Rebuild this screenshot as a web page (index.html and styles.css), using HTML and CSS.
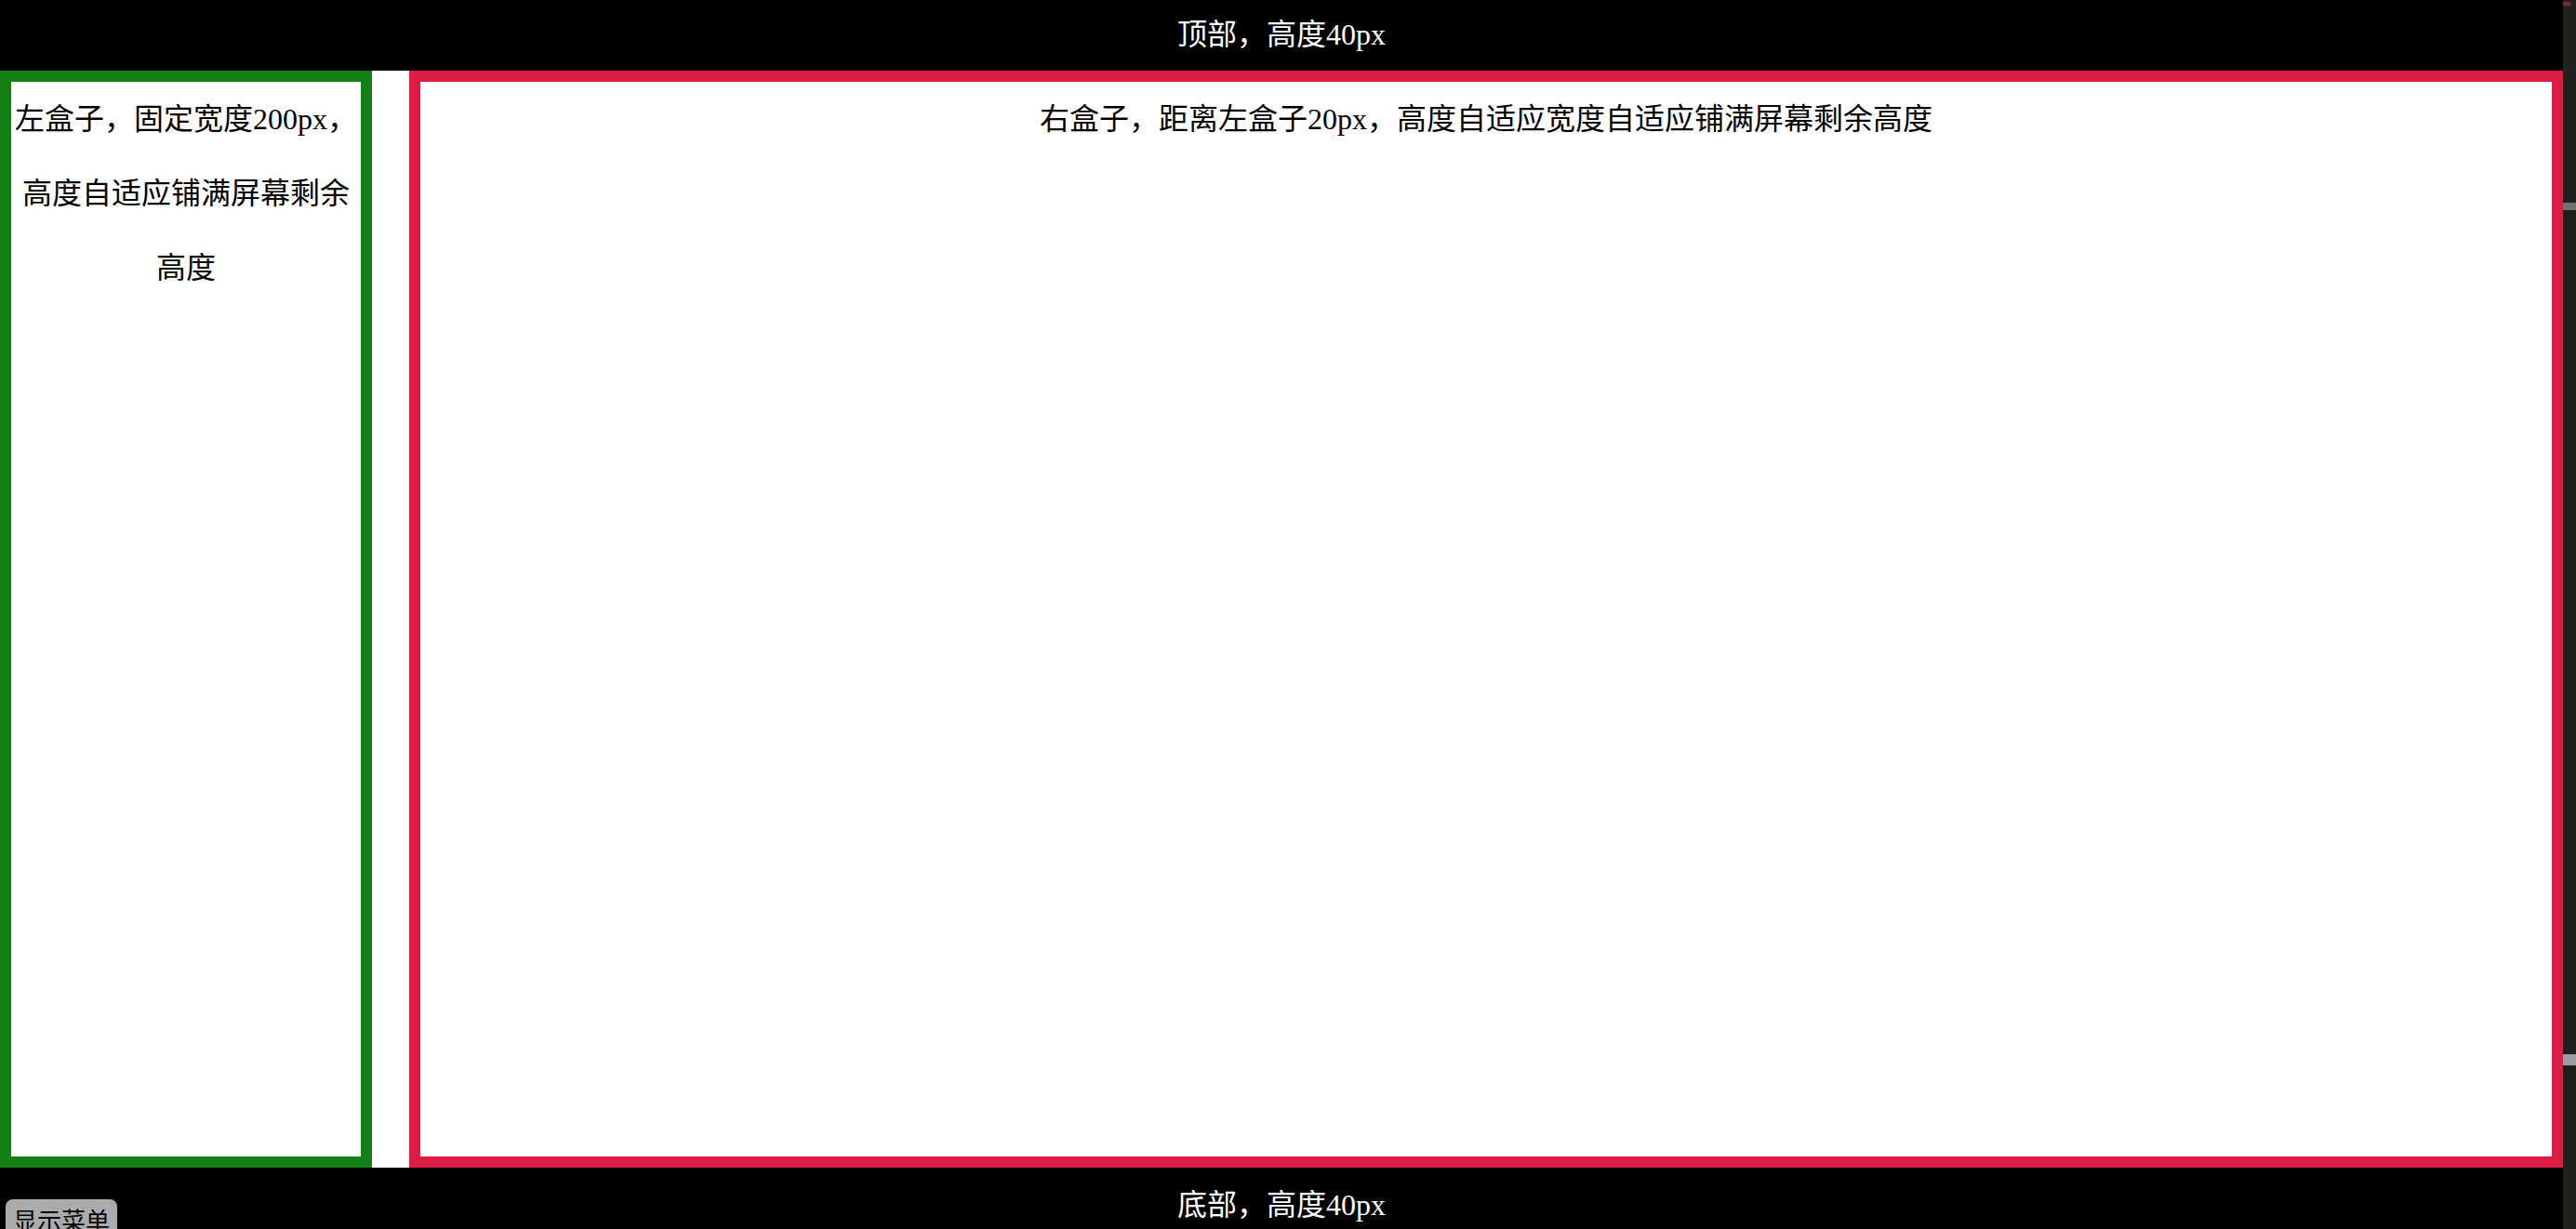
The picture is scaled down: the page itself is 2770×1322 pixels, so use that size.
FILE: index.html
```html
<!DOCTYPE html>
<html lang="zh-CN">
<head>
<meta charset="utf-8">
<title>布局</title>
<link rel="stylesheet" href="styles.css">
</head>
<body>
<div class="page">
  <div class="header">顶部，高度40px</div>
  <div class="main">
    <div class="left">左盒子，固定宽度200px，高度自适应铺满屏幕剩余高度</div>
    <div class="right">右盒子，距离左盒子20px，高度自适应宽度自适应铺满屏幕剩余高度</div>
  </div>
  <div class="footer">底部，高度40px
    <button class="menu-btn">显示菜单</button>
  </div>
</div>
<div class="scrollbar">
  <span class="mark mark-top"></span>
  <span class="mark mark-a"></span>
  <span class="mark mark-b"></span>
</div>
</body>
</html>
```
FILE: styles.css
```css
html, body {
  margin: 0;
  padding: 0;
  height: 100%;
  overflow: hidden;
}
body {
  display: flex;
  flex-direction: row;
  font-family: "Liberation Serif", "Noto Sans CJK SC", serif;
  font-size: 32px;
  background: #ffffff;
  color: #000000;
}
.page {
  flex: 1;
  display: flex;
  flex-direction: column;
  overflow: hidden;
  min-width: 0;
}
.header {
  flex-shrink: 0;
  height: 76px;
  line-height: 74px;
  background: #000000;
  color: #ffffff;
  text-align: center;
}
.main {
  flex-shrink: 0;
  height: 1180px;
  display: flex;
  flex-direction: row;
  gap: 40px;
}
.left {
  width: 400px;
  flex-shrink: 0;
  box-sizing: border-box;
  border: 12px solid #128014;
  text-align: center;
  line-height: 80px;
}
.right {
  flex: 1;
  box-sizing: border-box;
  border: 12px solid #dc1c44;
  text-align: center;
  line-height: 80px;
}
.footer {
  flex-shrink: 0;
  position: relative;
  height: 80px;
  line-height: 80px;
  background: #000000;
  color: #ffffff;
  text-align: center;
}
.menu-btn {
  position: absolute;
  left: 6px;
  top: 34px;
  width: 120px;
  height: 44px;
  padding: 0;
  border: none;
  border-radius: 8px;
  background: #ababab;
  color: #000000;
  font-family: "Noto Sans CJK SC", "Noto Sans", sans-serif;
  font-size: 26px;
  line-height: 40px;
  text-align: center;
}
.scrollbar {
  position: relative;
  width: 14px;
  flex-shrink: 0;
  background: #20201c;
}
.mark {
  position: absolute;
  left: 0;
  width: 14px;
}
.mark-top {
  top: 2px;
  height: 4px;
  width: 8px;
  background: #7a2a44;
}
.mark-a {
  top: 218px;
  height: 8px;
  background: #707070;
}
.mark-b {
  top: 1134px;
  height: 12px;
  background: #9a9b9f;
}
```
